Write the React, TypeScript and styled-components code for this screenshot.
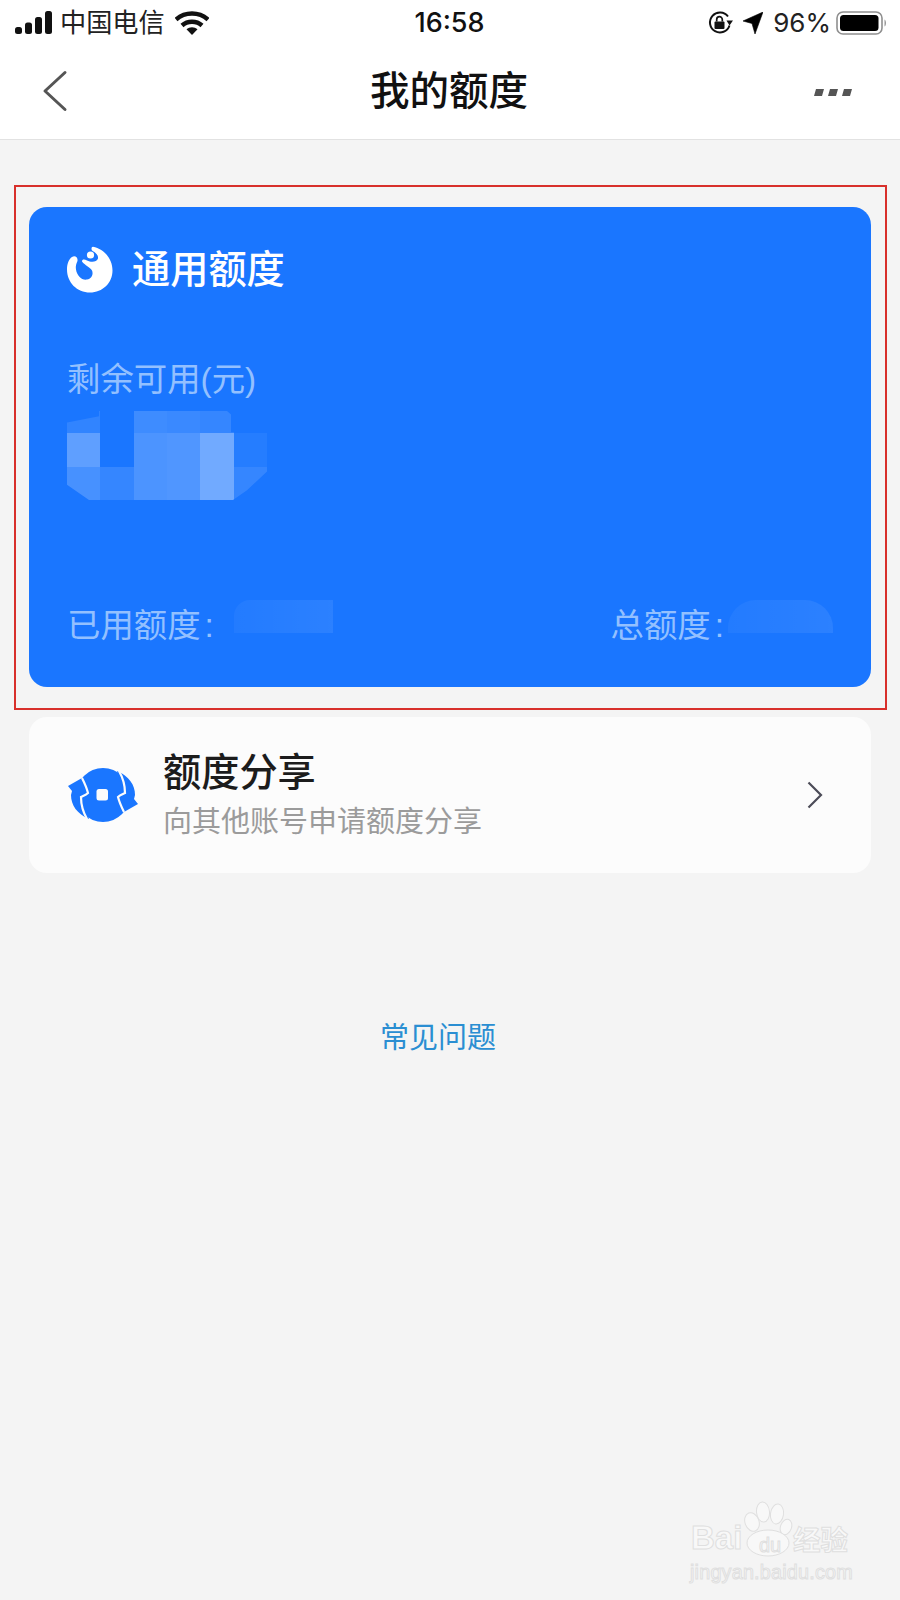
import React from "react";
import styled, { createGlobalStyle } from "styled-components";

const FONT = `"Liberation Sans", "Noto Sans CJK SC", sans-serif`;

const Global = createGlobalStyle`
  html, body { margin: 0; padding: 0; background: #f4f4f4; }
  body { font-family: ${FONT}; }
`;

const Page = styled.div`
  position: relative;
  width: 900px;
  height: 1600px;
  overflow: hidden;
  background: #f4f4f4;
`;

const Header = styled.header`
  background: #fff;
  border-bottom: 1px solid #e2e2e2;
`;

const StatusBar = styled.div`
  height: 46px;
  display: grid;
  grid-template-columns: 1fr auto 1fr;
  align-items: center;
  padding: 0 12px 0 15px;
  color: #111;
`;

const StatusLeft = styled.div`
  display: flex;
  align-items: center;
`;

const StatusRight = styled.div`
  display: flex;
  align-items: center;
  justify-content: flex-end;
`;

const Carrier = styled.span`
  font-size: 26.2px;
  line-height: 30px;
  margin: 0 10px 0 8px;
  color: #222;
`;

const Clock = styled.span`
  font-family: Inter, ${FONT};
  font-size: 27px;
  font-weight: 500;
  line-height: 30px;
  margin-right: 4px;
`;

const Percent = styled.span`
  font-family: Inter, ${FONT};
  font-size: 26px;
  line-height: 30px;
  margin: 0 5px 0 10px;
  color: #222;
`;

const IconGap = styled.span`
  width: 10px;
`;

const NavBar = styled.nav`
  height: 93px;
  display: grid;
  grid-template-columns: 1fr auto 1fr;
  align-items: center;
  padding: 0 48px 3px 42px;
  box-sizing: border-box;
`;

const NavBack = styled.div`
  display: flex;
`;

const NavTitle = styled.h1`
  margin: 0 0 0 4px;
  font-size: 39.5px;
  line-height: 50px;
  font-weight: 500;
  color: #111;
`;

const NavEnd = styled.div`
  display: flex;
  justify-content: flex-end;
  padding-top: 3px;
`;

const Highlight = styled.section`
  width: 873px;
  box-sizing: border-box;
  margin: 45px 0 0 14px;
  padding: 20px 14px 21px 13px;
  border: 2px solid #d8302b;
`;

const QuotaCard = styled.div`
  height: 480px;
  box-sizing: border-box;
  padding: 39px 38px 37px;
  border-radius: 18px;
  background: #1a76ff;
  display: flex;
  flex-direction: column;
`;

const CardHead = styled.div`
  display: flex;
  align-items: center;
  gap: 19px;
  height: 47px;
`;

const CardTitle = styled.h2`
  margin: 0;
  font-size: 38.2px;
  line-height: 47px;
  font-weight: 500;
  color: #fff;
`;

const SoftLabel = styled.div`
  font-size: 33.4px;
  line-height: 40px;
  color: #93c0ff;
  white-space: nowrap;
`;

const Remaining = styled(SoftLabel)`
  margin: 67px 0 11px 0;
`;

const Mosaic = styled.div`
  width: 200px;
  height: 89px;
  display: grid;
  grid-template-columns: repeat(6, 1fr);
  grid-template-rows: 22px 34px 33px;
  clip-path: polygon(0 13%, 16% 6%, 16% 0, 80% 0, 82% 4%, 82% 24%, 100% 24%, 100% 68%, 90% 89%, 83% 100%, 11% 100%, 0 83%);
`;

const MosaicCell = styled.div<{ $alpha: number }>`
  background: rgba(255, 255, 255, ${(p) => p.$alpha});
`;

const CardFoot = styled.div`
  margin-top: 100px;
  height: 50px;
  display: flex;
  justify-content: space-between;
`;

const FootGroup = styled.div`
  display: flex;
  align-items: flex-start;
`;

const FootLabel = styled(SoftLabel)`
  margin: 6px 0 0 0;
`;

const Colon = styled.span`
  margin-left: 4px;
`;

const Smudge = styled.div<{ $width: number; $gap: number; $corners: string }>`
  width: ${(p) => p.$width}px;
  height: 33px;
  margin-left: ${(p) => p.$gap}px;
  border-radius: ${(p) => p.$corners};
  background: linear-gradient(90deg, rgba(255, 255, 255, 0.04), rgba(255, 255, 255, 0.08));
`;

const ShareCard = styled.div`
  width: 842px;
  height: 156px;
  box-sizing: border-box;
  margin: 7px 0 0 29px;
  padding: 0 48px 0 38px;
  border-radius: 18px;
  background: #fcfcfc;
  display: flex;
  align-items: center;
`;

const ShareText = styled.div`
  flex: 1;
  margin-left: 24px;
`;

const ShareTitle = styled.div`
  font-size: 38.2px;
  line-height: 46px;
  font-weight: 500;
  color: #1c1c1c;
`;

const ShareSub = styled.div`
  margin-top: 8px;
  font-size: 29px;
  line-height: 36px;
  color: #9b9b9b;
`;

const Faq = styled.div`
  margin-top: 145px;
  padding-right: 24px;
  text-align: center;
  font-size: 29px;
  line-height: 40px;
  color: #2a8ed2;
`;

const Watermark = styled.div`
  position: absolute;
  left: 688px;
  top: 1500px;
  width: 170px;
  height: 84px;
  color: #f8f8f8;
  -webkit-text-stroke: 1px #dfdfdf;
`;

const WmBai = styled.span`
  position: absolute;
  left: 3px;
  top: 20px;
  font-size: 33px;
  line-height: 36px;
  font-weight: 700;
`;

const WmDu = styled.span`
  position: absolute;
  left: 71px;
  top: 35px;
  font-size: 20px;
  line-height: 20px;
`;

const WmCn = styled.span`
  position: absolute;
  left: 105px;
  top: 26px;
  font-size: 27.5px;
  line-height: 30px;
  font-weight: 700;
  white-space: nowrap;
`;

const WmUrl = styled.span`
  position: absolute;
  left: 2px;
  top: 60px;
  font-size: 19.8px;
  line-height: 24px;
  letter-spacing: 0.2px;
  white-space: nowrap;
`;

const WmPaw = styled.svg`
  position: absolute;
  left: 56px;
  top: 0;
`;

const SignalIcon = () => (
  <svg width="37" height="24" viewBox="0 0 37 24">
    <rect x="0" y="16" width="7" height="7" rx="2.5" fill="#111" />
    <rect x="10" y="11.5" width="7" height="11.5" rx="2.5" fill="#111" />
    <rect x="20" y="6" width="7" height="17" rx="2.5" fill="#111" />
    <rect x="30" y="0" width="7" height="23" rx="2.5" fill="#111" />
  </svg>
);

const WifiIcon = () => (
  <svg width="34" height="24" viewBox="0 0 34 24">
    <path d="M1 8.5C10 .5 24 .5 33 8.5" fill="none" stroke="#111" strokeWidth="4.4" />
    <path d="M7 14.5C12.5 9.5 21.5 9.5 27 14.5" fill="none" stroke="#111" strokeWidth="4.4" />
    <path d="M11.5 18.3C14.5 15.6 19.5 15.6 22.5 18.3L17 24Z" fill="#111" />
  </svg>
);

const RotateLockIcon = () => (
  <svg width="25" height="24" viewBox="0 0 25 24">
    <path d="M21.5 14.5A10 10 0 1 1 20 5.5" fill="none" stroke="#111" strokeWidth="2" />
    <path d="M18.5 9.5L25 9.5L21.5 14.5Z" fill="#111" />
    <rect x="6.5" y="10.5" width="10" height="7.5" rx="1" fill="#111" />
    <path d="M8.7 10.5V8.5a2.8 2.8 0 0 1 5.6 0V10.5" fill="none" stroke="#111" strokeWidth="1.7" />
  </svg>
);

const LocationIcon = () => (
  <svg width="20" height="22" viewBox="0 0 20 22">
    <path d="M20 0L12 22L9 11.5L0 9Z" fill="#000" stroke="#000" strokeWidth="0.6" />
  </svg>
);

const BatteryIcon = () => (
  <svg width="52" height="24" viewBox="0 0 52 24">
    <rect x="1" y="1" width="45" height="22" rx="6" fill="none" stroke="#8f8f8f" strokeWidth="1.6" />
    <rect x="4" y="4" width="38.5" height="16" rx="3.5" fill="#000" />
    <path d="M48.5 8.5C50.5 9.5 50.5 14.5 48.5 15.5Z" fill="#9a9a9a" />
  </svg>
);

const BackIcon = () => (
  <svg width="26" height="42" viewBox="0 0 26 42">
    <path d="M23 2.5L3 21L23 39.5" fill="none" stroke="#555" strokeWidth="3" strokeLinecap="round" strokeLinejoin="round" />
  </svg>
);

const MoreIcon = () => (
  <svg width="38" height="7" viewBox="0 0 38 7">
    <path d="M2 0H10L8 7H0ZM16 0H24L22 7H14ZM30 0H38L36 7H28Z" fill="#555" />
  </svg>
);

const QuotaLogo = () => (
  <svg width="46" height="47" viewBox="0 0 46 47">
    <path
      d="M26 .8C37 3 45.5 12.5 45.5 24.5C45.5 37 35.5 46.5 23 46.5C10 46.5 0 36.5 0 23.5C0 17.5 2 13 5 11C8.5 9 11.5 12 10.3 15.5C9 18.5 8.5 20.5 9 23.5C10 30 15 34.5 20 33.5C25 32.5 26.5 28 25 24.5C23 21 18 19.5 15 15.5C15 13 17.5 13 20 14.5C24 16.5 29.5 16.5 31 12.5C31.5 9 28.5 6.5 26 5.2C24 4 24 1 26 .8Z"
      fill="#fff"
    />
    <circle cx="23.5" cy="9" r="3.6" fill="#fff" />
  </svg>
);

const shareWing = "M1 19L15 11L24 27L16 31L22 52C10 47 4 38 4 28L5 24Z";
const shareGap = "M15 11C18 17 20 22 21 26C19 28 16 29 14 30C14 38 16 45 20 52";

const ShareIcon = () => (
  <svg width="72" height="56" viewBox="0 0 72 56">
    <circle cx="36" cy="28" r="27" fill="#1a76ff" />
    <path d={shareWing} fill="#1a76ff" />
    <path d={shareWing} fill="#1a76ff" transform="rotate(180 36 28)" />
    <path d={shareGap} fill="none" stroke="#fcfcfc" strokeWidth="2.2" />
    <path d={shareGap} fill="none" stroke="#fcfcfc" strokeWidth="2.2" transform="rotate(180 36 28)" />
    <rect x="29.5" y="22" width="11.5" height="11.5" rx="2.5" fill="#fcfcfc" />
  </svg>
);

const Chevron = () => (
  <svg width="16" height="28" viewBox="0 0 16 28">
    <path d="M1.5 1.5L14 14L1.5 26.5" fill="none" stroke="#4c4c58" strokeWidth="2.2" />
  </svg>
);

const mosaicCells = [
  0.1, 0, 0.16, 0.14, 0.12, 0,
  0.3, 0, 0.22, 0.24, 0.38, 0.05,
  0.2, 0.12, 0.22, 0.24, 0.38, 0.12,
];

export default function App() {
  return (
    <Page>
      <Global />
      <Header>
        <StatusBar>
          <StatusLeft>
            <SignalIcon />
            <Carrier>中国电信</Carrier>
            <WifiIcon />
          </StatusLeft>
          <Clock>16:58</Clock>
          <StatusRight>
            <RotateLockIcon />
            <IconGap />
            <LocationIcon />
            <Percent>96%</Percent>
            <BatteryIcon />
          </StatusRight>
        </StatusBar>
        <NavBar>
          <NavBack>
            <BackIcon />
          </NavBack>
          <NavTitle>我的额度</NavTitle>
          <NavEnd>
            <MoreIcon />
          </NavEnd>
        </NavBar>
      </Header>

      <Highlight>
        <QuotaCard>
          <CardHead>
            <QuotaLogo />
            <CardTitle>通用额度</CardTitle>
          </CardHead>
          <Remaining>剩余可用(元)</Remaining>
          <Mosaic>
            {mosaicCells.map((alpha, i) => (
              <MosaicCell key={i} $alpha={alpha} />
            ))}
          </Mosaic>
          <CardFoot>
            <FootGroup>
              <FootLabel>
                已用额度<Colon>:</Colon>
              </FootLabel>
              <Smudge $width={99} $gap={20} $corners="16px 0 0 0" />
            </FootGroup>
            <FootGroup>
              <FootLabel>
                总额度<Colon>:</Colon>
              </FootLabel>
              <Smudge $width={105} $gap={4} $corners="28px 28px 0 0" />
            </FootGroup>
          </CardFoot>
        </QuotaCard>
      </Highlight>

      <ShareCard>
        <ShareIcon />
        <ShareText>
          <ShareTitle>额度分享</ShareTitle>
          <ShareSub>向其他账号申请额度分享</ShareSub>
        </ShareText>
        <Chevron />
      </ShareCard>

      <Faq>常见问题</Faq>

      <Watermark>
        <WmPaw width="60" height="70" viewBox="0 0 60 70">
          <g fill="#f8f8f8" stroke="#dfdfdf" strokeWidth="1">
            <ellipse cx="8" cy="22" rx="7" ry="9.5" transform="rotate(-20 8 22)" />
            <ellipse cx="19" cy="12" rx="6.5" ry="10" transform="rotate(-5 19 12)" />
            <ellipse cx="33" cy="14" rx="6.5" ry="10" transform="rotate(8 33 14)" />
            <ellipse cx="42" cy="27" rx="5.5" ry="8" transform="rotate(20 42 27)" />
            <ellipse cx="24" cy="43" rx="21" ry="13" />
          </g>
        </WmPaw>
        <WmBai>Bai</WmBai>
        <WmDu>du</WmDu>
        <WmCn>经验</WmCn>
        <WmUrl>jingyan.baidu.com</WmUrl>
      </Watermark>
    </Page>
  );
}
